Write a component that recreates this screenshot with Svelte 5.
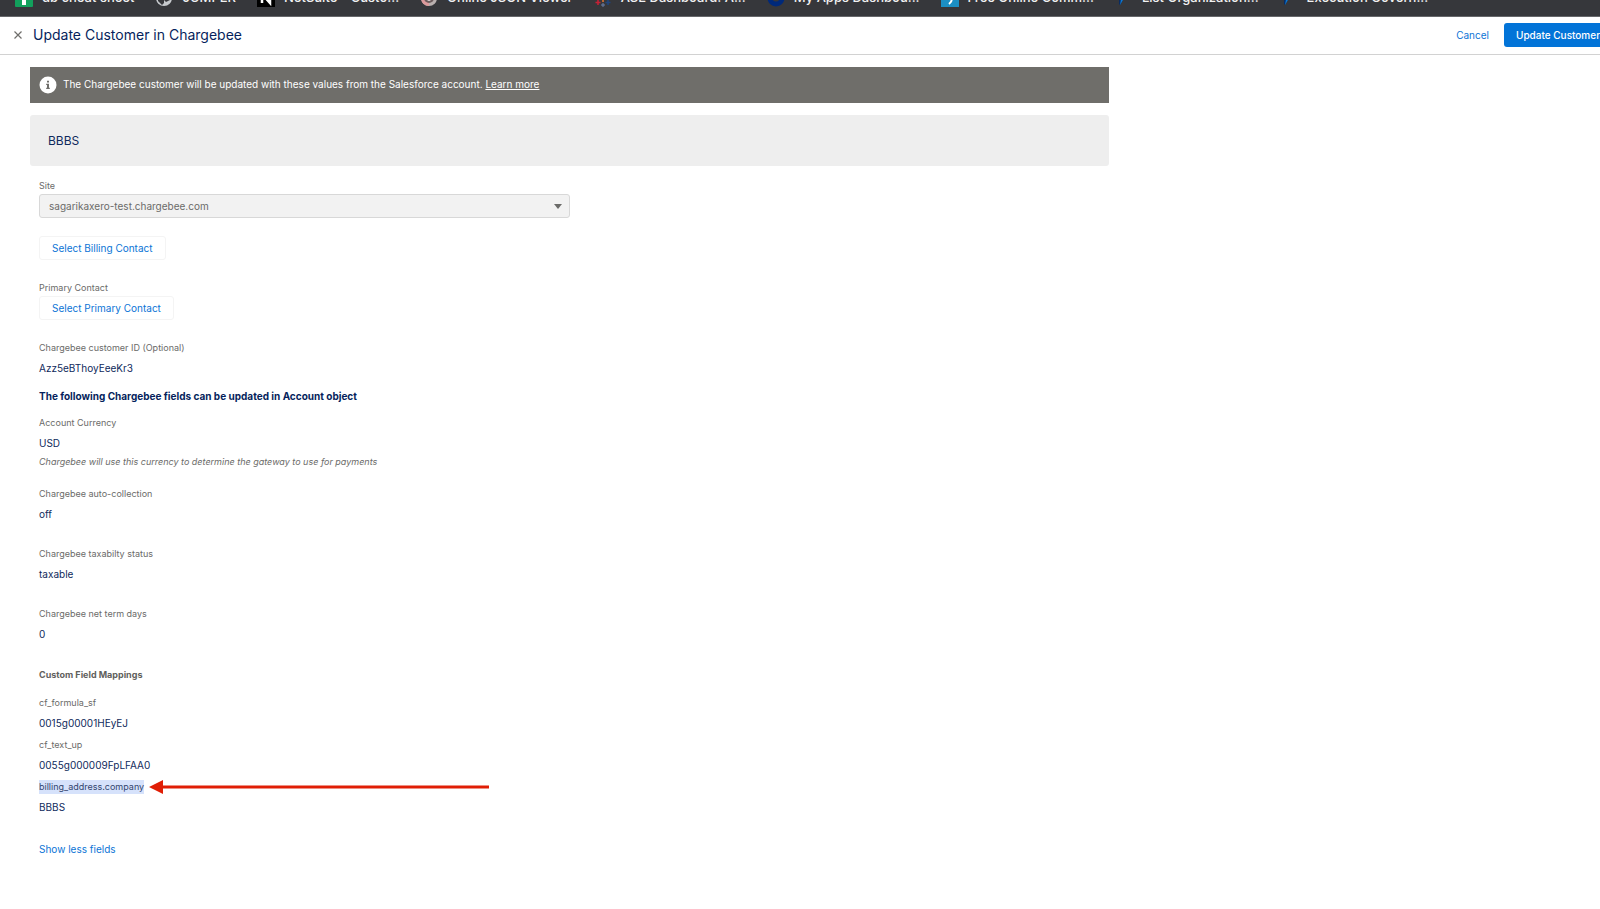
<script lang="ts">
	const bookmarks = [
		{ icon: 'sheet', title: 'db cheat sheet' },
		{ icon: 'globe', title: 'JUMPER' },
		{ icon: 'netsuite', title: 'NetSuite – Custo...' },
		{ icon: 'json', title: 'Online JSON Viewer' },
		{ icon: 'tableau', title: 'ASE Dashboard: A...' },
		{ icon: 'okta', title: 'My Apps Dashbou...' },
		{ icon: 'comm', title: 'Free Online Comm...' },
		{ icon: 'bolt', title: 'List Organization...' },
		{ icon: 'bolt', title: 'Execution Govern...' }
	];

	const statusFields = [
		{ label: 'Chargebee auto-collection', value: 'off' },
		{ label: 'Chargebee taxabilty status', value: 'taxable' },
		{ label: 'Chargebee net term days', value: '0' }
	];

	const customFields = [
		{ label: 'cf_formula_sf', value: '0015g00001HEyEJ' },
		{ label: 'cf_text_up', value: '0055g000009FpLFAA0' },
		{ label: 'billing_address.company', value: 'BBBS', marked: true }
	];
</script>

<nav class="bookmarks" aria-label="Bookmarks">
	{#each bookmarks as { icon, title }}
		<a href="#{icon}">
			<svg viewBox="0 0 18 18" aria-hidden="true">
				{#if icon === 'sheet'}
					<rect width="18" height="18" rx="1" fill="#12a05c" />
					<path d="M7 4h4v12H7z" fill="#fff" />
				{:else if icon === 'globe'}
					<circle cx="9" cy="9" r="8" fill="#c6c9cd" />
					<path d="M3 8l6 3v3l-2 2-4-4zM9 11l5-3 1 3-4 2z" fill="#36373b" />
				{:else if icon === 'netsuite'}
					<rect width="18" height="18" fill="#000" />
					<path d="M5 14V5l8 9V5" fill="none" stroke="#fff" stroke-width="2.5" />
				{:else if icon === 'json'}
					<circle cx="9" cy="9" r="8" fill="#b9b0af" />
					<path d="M1 9a8 8 0 0 0 8 8V1a8 8 0 0 0-8 8z" fill="#dc9a9c" />
					<circle cx="9" cy="9" r="5" fill="#6d5c5d" />
					<circle cx="9" cy="10" r="2" fill="#d9d2d1" />
				{:else if icon === 'tableau'}
					<path d="M4 11v5M1.500 13.500h5" stroke="#c72035" stroke-width="1.500" />
					<path d="M14 11v5M11.500 13.500h5" stroke="#1f457e" stroke-width="1.500" />
					<path d="M9 7v6M6 10h6" stroke="#e8762d" stroke-width="1.500" />
					<path d="M9 14v4M7 16h4" stroke="#6b7fa8" stroke-width="1" />
				{:else if icon === 'okta'}
					<circle cx="9" cy="9" r="6" fill="none" stroke="#00297a" stroke-width="5" />
				{:else if icon === 'comm'}
					<rect width="18" height="18" fill="#1c8fc4" />
					<path d="M6 8c4-1 7 3 2 7" fill="none" stroke="#fff" stroke-width="2" />
				{:else}
					<path d="M4 4h8l-7 12z" fill="#0a78d6" />
					<path d="M4 10h2l-1 6-1-1z" fill="#072b63" />
				{/if}
			</svg>
			{title}
		</a>
	{/each}
</nav>

<header>
	<button class="close" type="button" aria-label="Close">
		<svg viewBox="0 0 8 8" aria-hidden="true">
			<path d="M.5.5l7 7M7.500.5l-7 7" stroke="#6f6e6b" stroke-width="1.200" />
		</svg>
	</button>
	<h1>Update Customer in Chargebee</h1>
	<div class="actions">
		<button class="cancel" type="button">Cancel</button>
		<button class="primary" type="button">Update Customer</button>
	</div>
</header>

<main>
	<div class="banner">
		<svg viewBox="0 0 18 18" aria-hidden="true">
			<circle cx="9" cy="9" r="8.500" fill="#fff" />
			<path d="M8 4.800h2v1.800H8zM7.200 7.800H10v4h.8V13H7.200v-1.200H8V9h-.8z" fill="#6f6e6a" />
		</svg>
		<p>
			The Chargebee customer will be updated with these values from the Salesforce account.
			<a href="#learn">Learn more</a>
		</p>
	</div>

	<h2>BBBS</h2>

	<form>
		<div class="site">
			<label for="site">Site</label>
			<div class="select">
				<select id="site" disabled>
					<option>sagarikaxero-test.chargebee.com</option>
				</select>
				<svg viewBox="0 0 8 5" aria-hidden="true"><path d="M0 0h8L4 5z" fill="#6b6b69" /></svg>
			</div>
		</div>

		<button class="pick" type="button">Select Billing Contact</button>

		<div class="contact">
			<span class="label" id="primary">Primary Contact</span>
			<button class="pick" type="button" aria-describedby="primary">Select Primary Contact</button>
		</div>

		<dl>
			<dt>Chargebee customer ID (Optional)</dt>
			<dd>Azz5eBThoyEeeKr3</dd>
		</dl>

		<h3>The following Chargebee fields can be updated in Account object</h3>

		<dl>
			<dt>Account Currency</dt>
			<dd>USD</dd>
		</dl>
		<p class="hint">Chargebee will use this currency to determine the gateway to use for payments</p>

		<div class="status">
			{#each statusFields as { label, value }}
				<dl>
					<dt>{label}</dt>
					<dd>{value}</dd>
				</dl>
			{/each}
		</div>

		<h4>Custom Field Mappings</h4>

		<div class="custom">
			{#each customFields as { label, value, marked }}
				<dl>
					<dt>
						<span class:marked>{label}</span>
						{#if marked}
							<svg class="arrow" viewBox="0 0 340 14" aria-hidden="true">
								<path d="M0 7L14 0v5.500h326v3H14V14z" fill="#e01e05" />
							</svg>
						{/if}
					</dt>
					<dd>{value}</dd>
				</dl>
			{/each}
		</div>

		<button class="less" type="button">Show less fields</button>
	</form>
</main>

<style>
	:global(body) {
		background: #fff;
		color: #0f2a5c;
		font-family: Inter, 'Liberation Sans', sans-serif;
		font-size: 10px;
		line-height: 16px;
		overflow-x: hidden;
	}
	h1,
	h2,
	h3,
	h4,
	p,
	dl,
	dd {
		margin: 0;
	}
	button {
		border: none;
		background: transparent;
		padding: 0;
		color: #0b74d6;
		font: inherit;
	}
	svg {
		flex: none;
		display: block;
	}

	.bookmarks {
		display: flex;
		align-items: flex-end;
		gap: 21px;
		box-sizing: border-box;
		height: 17px;
		padding: 0 15px 9px;
		border-bottom: 1px solid #66676a;
		background: #36373b;
		overflow: hidden;
	}
	.bookmarks a {
		display: flex;
		align-items: flex-start;
		gap: 9px;
		color: #f1f1f2;
		font-size: 13px;
		font-weight: 500;
		line-height: 16px;
		text-decoration: none;
		white-space: nowrap;
	}
	.bookmarks svg {
		width: 18px;
		height: 18px;
	}

	header {
		display: flex;
		align-items: center;
		box-sizing: border-box;
		height: 38px;
		padding: 0 0 2px 14px;
		border-bottom: 1px solid #d2d2d2;
		overflow: hidden;
	}
	.close {
		margin-right: 11px;
	}
	.close svg {
		width: 8px;
		height: 8px;
	}
	h1 {
		color: #061f5c;
		font-size: 14px;
		font-weight: 400;
		line-height: 20px;
	}
	.actions {
		display: flex;
		align-items: center;
		gap: 15px;
		margin-left: auto;
		margin-right: -12px;
	}
	.primary {
		height: 24px;
		padding: 0 12px;
		border-radius: 3px;
		background: #0274d8;
		color: #fff;
		font-weight: 500;
	}

	main {
		width: 70%;
		box-sizing: border-box;
		padding: 12px 11px 40px 30px;
	}
	.banner {
		display: flex;
		align-items: center;
		gap: 6px;
		height: 36px;
		padding: 0 9px;
		background: #6f6e6a;
		color: #fff;
	}
	.banner svg {
		width: 18px;
		height: 18px;
	}
	.banner p {
		padding-bottom: 3px;
	}
	.banner a {
		color: inherit;
	}
	h2 {
		margin-top: 12px;
		padding: 16px 18px 15px;
		border-radius: 3px;
		background: #eee;
		font-size: 12px;
		font-weight: 400;
		line-height: 20px;
	}

	form {
		padding: 12px 9px 0;
	}
	label,
	.label,
	dt {
		display: block;
		color: #6b6b69;
		font-size: 9px;
		line-height: 16px;
	}
	.site {
		width: 50%;
		margin-bottom: 18px;
	}
	.select {
		display: grid;
		align-items: center;
	}
	.select > * {
		grid-area: 1 / 1;
	}
	.select svg {
		justify-self: end;
		width: 8px;
		height: 5px;
		margin-right: 8px;
		pointer-events: none;
	}
	select {
		appearance: none;
		box-sizing: border-box;
		width: 100%;
		height: 24px;
		padding: 0 9px;
		border: 1px solid #d8d8d8;
		border-radius: 3px;
		background: #f2f2f2;
		color: #6b6b69;
		font: inherit;
		opacity: 1;
	}
	.pick {
		display: block;
		height: 24px;
		padding: 0 12px;
		border: 1px solid #f4f4f4;
		border-radius: 3px;
	}
	.contact {
		margin: 20px 0;
	}
	dd {
		line-height: 24px;
	}
	h3 {
		margin: 8px 0 11px;
		color: #061f5c;
		font-size: 10px;
		line-height: 16px;
	}
	.hint {
		margin-top: -1px;
		color: #6b6b69;
		font-size: 9px;
		font-style: italic;
	}
	.status {
		display: grid;
		gap: 20px;
		margin: 16px 0 21px;
	}
	h4 {
		margin-bottom: 12px;
		color: #5f5f5d;
		font-size: 9px;
		line-height: 16px;
	}
	.custom {
		display: grid;
		gap: 2px;
		margin-bottom: 22px;
	}
	.custom dt {
		display: flex;
		align-items: center;
		gap: 5px;
		min-height: 16px;
	}
	.marked {
		background: #d6e2fb;
		color: #33456f;
		line-height: 14px;
	}
	.arrow {
		width: 340px;
		height: 14px;
	}
</style>
